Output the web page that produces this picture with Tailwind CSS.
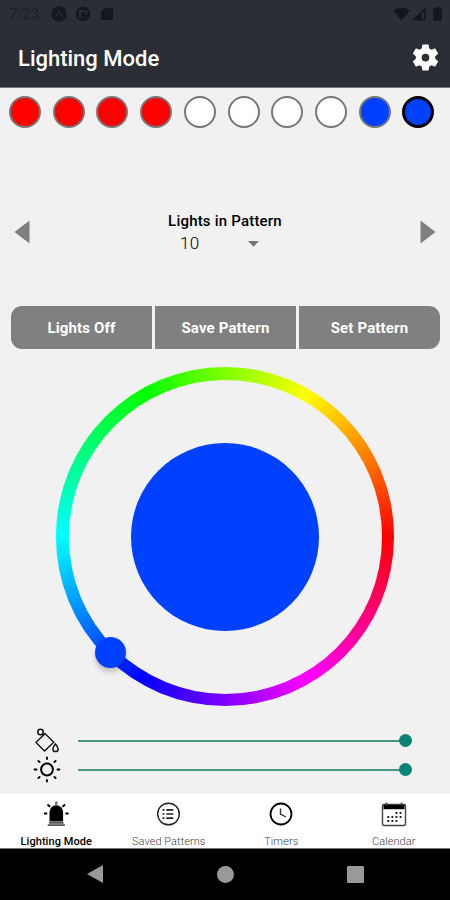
<!DOCTYPE html>
<html lang="en">
<head>
    <meta charset="UTF-8">
    <meta name="viewport" content="width=device-width, initial-scale=1.0">
    <title>Lighting Mode</title>
    <script src="https://cdn.jsdelivr.net/npm/@tailwindcss/browser@4"></script>
</head>
<body class="bg-[#f1f1f1] font-['Roboto',sans-serif] text-black">
    <div class="w-[450px] h-[900px] flex flex-col overflow-hidden">
        <header class="h-[88px] shrink-0 bg-[#2b2e34] border-b border-[#77797c] text-white">
            <!-- Status bar -->
            <div class="h-7 pl-[9px] pr-2 flex items-center justify-between text-[#14171b]">
                <div class="flex items-center">
                    <span class="w-[42px] text-[15px] text-[#1b1e23] tracking-[0.3px]">7:23</span>
                    <svg class="w-4 h-4" viewBox="0 0 16 16">
                        <circle cx="8" cy="8" r="7.7" fill="currentColor"/>
                        <path d="M4.5 10.800 8 5.200l3.500 5.600" fill="none" stroke="#2b2e34" stroke-width="1.3"/>
                    </svg>
                    <svg class="w-4 h-4 ml-2" viewBox="0 0 16 16">
                        <circle cx="8" cy="8" r="7.3" fill="currentColor"/>
                        <path d="M4 4h5.500v2.300H6.300V12H4zM10.500 4h1.800v4.500h-1.800z" fill="#2b2e34"/>
                    </svg>
                    <svg class="w-3 h-[14px] ml-2.5" viewBox="0 0 12 14">
                        <path d="M4 1h7a1 1 0 0 1 1 1v10a1 1 0 0 1-1 1H1a1 1 0 0 1-1-1V5z" fill="currentColor"/>
                    </svg>
                </div>
                <div class="flex items-center">
                    <svg class="w-[17px] h-[14px]" viewBox="0 0 17 14">
                        <path d="M0 3.600Q8.500-2.400 17 3.600L8.500 13.800z" fill="currentColor"/>
                    </svg>
                    <svg class="w-[14px] h-[14px] ml-[2px]" viewBox="0 0 14 14">
                        <path d="M0 13.500 13.500 0v13.500z" fill="currentColor"/>
                        <path d="M10 5.500h2v6.500h-2z" fill="#2b2e34"/>
                    </svg>
                    <svg class="w-[9px] h-[14px] ml-[7px]" viewBox="0 0 9 14">
                        <path d="M2.500 0h4v1.500H8a1 1 0 0 1 1 1V13a1 1 0 0 1-1 1H1a1 1 0 0 1-1-1V2.500a1 1 0 0 1 1-1h1.500z" fill="currentColor"/>
                    </svg>
                </div>
            </div>
            <div class="h-[60px] pl-[18px] pr-[9px] flex items-center justify-between">
                <h1 class="text-[22px] font-medium">Lighting Mode</h1>
                <svg class="w-[31px] h-[31px] -mt-[2px]" viewBox="0 0 24 24" fill="currentColor">
                    <path d="M19.430 12.980c.04-.32.07-.64.07-.98s-.03-.66-.07-.98l2.110-1.650c.19-.15.24-.42.12-.64l-2-3.460c-.12-.22-.39-.3-.61-.22l-2.490 1c-.52-.4-1.080-.73-1.690-.98l-.38-2.650C14.460 2.180 14.250 2 14 2h-4c-.25 0-.46.18-.49.42l-.38 2.650c-.61.25-1.170.59-1.690.98l-2.490-1c-.23-.09-.49 0-.61.22l-2 3.460c-.13.22-.07.49.12.64l2.110 1.650c-.04.32-.07.65-.07.98s.03.66.07.98l-2.110 1.650c-.19.15-.24.42-.12.64l2 3.460c.12.22.39.3.61.22l2.490-1c.52.4 1.080.73 1.690.98l.38 2.650c.03.24.24.42.49.42h4c.25 0 .46-.18.49-.42l.38-2.650c.61-.25 1.170-.59 1.690-.98l2.490 1c.23.09.49 0 .61-.22l2-3.460c.12-.22.07-.49-.12-.64zM12 15a3 3 0 1 1 0-6 3 3 0 0 1 0 6z"/>
                </svg>
            </div>
        </header>

        <!-- Lights of the pattern -->
        <div class="h-12 shrink-0 pl-[9px] pr-[15.5px] flex items-center justify-between">
            <span class="w-8 h-8 rounded-full border-2 border-[#777] bg-[#ff0000]"></span>
            <span class="w-8 h-8 rounded-full border-2 border-[#777] bg-[#ff0000]"></span>
            <span class="w-8 h-8 rounded-full border-2 border-[#777] bg-[#ff0000]"></span>
            <span class="w-8 h-8 rounded-full border-2 border-[#777] bg-[#ff0000]"></span>
            <span class="w-8 h-8 rounded-full border-2 border-[#777] bg-white"></span>
            <span class="w-8 h-8 rounded-full border-2 border-[#777] bg-white"></span>
            <span class="w-8 h-8 rounded-full border-2 border-[#777] bg-white"></span>
            <span class="w-8 h-8 rounded-full border-2 border-[#777] bg-white"></span>
            <span class="w-8 h-8 rounded-full border-2 border-[#777] bg-[#0040ff]"></span>
            <span class="w-8 h-8 rounded-full border-3 border-black bg-[#0040ff]"></span>
        </div>

        <!-- Pattern length -->
        <div class="h-[170px] shrink-0 pt-[74px] px-[14px] flex items-start justify-between">
            <svg class="w-4 h-6 mt-[10px]" viewBox="0 0 16 24"><path d="M.5 12 15.500.5v23z" fill="#7f7f7f"/></svg>
            <div class="w-[130px] flex flex-col items-center">
                <span class="text-[15px] leading-[22px] font-medium tracking-[0.2px] whitespace-nowrap">Lights in Pattern</span>
                <div class="w-full h-[24px] pl-[20px] pr-[31px] flex items-center justify-between">
                    <span class="text-[17px] font-light tracking-[0.4px]">10</span>
                    <svg class="w-[11px] h-[6px] -mt-px" viewBox="0 0 11 6"><path d="M0 0h11L5.500 5.800z" fill="#777"/></svg>
                </div>
            </div>
            <svg class="w-4 h-6 mt-[10px]" viewBox="0 0 16 24"><path d="M15.500 12 .5.5v23z" fill="#7f7f7f"/></svg>
        </div>

        <div class="h-[43px] shrink-0 ml-[11px] mr-[10px] grid grid-cols-[141px_141px_1fr] gap-[3px] text-white text-[15px] font-bold tracking-[0.15px]">
            <button class="pt-[2px] bg-[#808080] rounded-l-[11px]">Lights Off</button>
            <button class="pt-[2px] bg-[#808080]">Save Pattern</button>
            <button class="pt-[2px] bg-[#808080] rounded-r-[11px]">Set Pattern</button>
        </div>

        <!-- Color wheel -->
        <div class="h-[377px] shrink-0 pt-[18px] flex justify-center">
            <div class="relative w-[338px] h-[339px] rounded-full flex items-center justify-center bg-[conic-gradient(from_90deg,#ff0000,#ff00ff,#0000ff,#00ffff,#00ff00,#ffff00,#ff0000)]">
                <div class="w-[313px] h-[314px] rounded-full bg-[#f1f1f1] flex items-center justify-center">
                    <div class="w-[188px] h-[188px] rounded-full bg-[#0040ff]"></div>
                </div>
                <span class="absolute left-[39px] top-[270px] w-[31px] h-[31px] rounded-full bg-[#0040ff] shadow-[0_4px_5px_rgba(0,0,0,0.2)]"></span>
            </div>
        </div>

        <!-- Saturation and brightness -->
        <div class="h-[68px] shrink-0 pl-[33px] pr-[38px]">
            <div class="h-[29px] flex items-center">
                <svg class="w-7 h-7" viewBox="0 0 28 28" fill="none" stroke="#111">
                    <path d="M12 6.500 20.800 15.300 11.500 24 3 15.500z" stroke-width="1.300"/>
                    <circle cx="7.500" cy="5" r="2.700" stroke-width="1.500"/>
                    <path d="M9 7l2 2" stroke-width="1.500"/>
                    <path d="M22.500 17c1.800 2.100 2.600 3.600 2.600 4.900a2.600 2.600 0 0 1-5.200 0c0-1.300.8-2.800 2.600-4.900z" stroke-width="1.500"/>
                </svg>
                <span class="ml-[17px] flex-1 h-[2px] bg-[#4a9586]"></span>
                <span class="-ml-[6px] w-[13px] h-[13px] rounded-full bg-[#088475]"></span>
            </div>
            <div class="h-[29px] flex items-center">
                <svg class="w-7 h-7" viewBox="0 0 28 28" fill="none" stroke="#000" stroke-width="2" stroke-linecap="round">
                    <circle cx="14" cy="13.500" r="5.900"/>
                    <path d="M14 1.400v1.600M14 24v1.600M1.600 13.500h1.900M24.500 13.500h1.900M5.400 4.900l1.200 1.200M21.400 20.900l1.200 1.200M5.400 22.100l1.200-1.200M21.400 6.100l1.200-1.200" stroke-width="1.900"/>
                </svg>
                <span class="ml-[17px] flex-1 h-[2px] bg-[#4a9586]"></span>
                <span class="-ml-[6px] w-[13px] h-[13px] rounded-full bg-[#088475]"></span>
            </div>
        </div>

        <!-- Tabs -->
        <nav class="h-[55px] shrink-0 pt-1.5 grid grid-cols-4 bg-white text-[11px] leading-[14px] border-b border-[#777]">
            <div class="flex flex-col items-center gap-[7px]">
                <svg class="w-7 h-7" viewBox="0 0 28 28">
                    <path d="M7.500 21.500V12a6.800 6.800 0 0 1 13.600 0v9.500z"/>
                    <path d="M14.300 1.500v4" stroke="#777" stroke-width="2.400"/>
                    <path d="M5.500 4.500l2.600 2.200M23.100 4.500l-2.600 2.200M2 13.500h3.200M23.400 13.500h3.200" stroke="#000" stroke-width="2"/>
                    <path d="M7 22.800h14.600M5.700 25.200h17.200" stroke="#555" stroke-width="1.700"/>
                </svg>
                <span class="font-medium whitespace-nowrap tracking-[0.05px]">Lighting Mode</span>
            </div>
            <div class="flex flex-col items-center gap-[7px] text-[#444]">
                <svg class="w-7 h-7" viewBox="0 0 28 28" fill="none" stroke="#222">
                    <circle cx="13.500" cy="14" r="10.800" stroke-width="1.400"/>
                    <path d="M7.500 9.800h2M11.300 9.800h7M7.500 14h2M11.300 14h7M7.500 18.200h2M11.300 18.200h7" stroke-width="1.700"/>
                </svg>
                <span class="font-light whitespace-nowrap tracking-[0.05px]">Saved Patterns</span>
            </div>
            <div class="flex flex-col items-center gap-[7px] text-[#444]">
                <svg class="w-7 h-7" viewBox="0 0 28 28" fill="none" stroke="#000">
                    <circle cx="14" cy="14" r="10.500" stroke-width="1.800"/>
                    <path d="M13.500 8.500V14l5.500 3" stroke="#333" stroke-width="1.400"/>
                </svg>
                <span class="font-light tracking-[0.05px]">Timers</span>
            </div>
            <div class="flex flex-col items-center gap-[7px] text-[#444]">
                <svg class="w-7 h-7" viewBox="0 0 28 28">
                    <rect x="2.500" y="4.500" width="23" height="21" rx="1.500" fill="#fff" stroke="#444" stroke-width="1.400"/>
                    <path d="M3.500 4.800h21v4.400h-21z"/>
                    <path d="M6.500 2.500v3M21.500 2.500v3" stroke="#444" stroke-width="1.500"/>
                    <path d="M15.500 13h6.500M7.300 17h14.700M7.300 21h10.500" stroke="#222" stroke-width="1.900" stroke-dasharray="1.900 2.200"/>
                </svg>
                <span class="font-light tracking-[0.05px]">Calendar</span>
            </div>
        </nav>

        <!-- System buttons -->
        <div class="h-[51px] shrink-0 bg-black pb-px pl-[87px] pr-[86px] flex items-center justify-between">
            <svg class="w-4 h-[18px]" viewBox="0 0 16 18"><path d="M0 9 16 0v18z" fill="#999"/></svg>
            <span class="w-[17px] h-[17px] rounded-full bg-[#999]"></span>
            <span class="w-[17px] h-[17px] rounded-[1px] bg-[#999]"></span>
        </div>
    </div>
</body>
</html>
